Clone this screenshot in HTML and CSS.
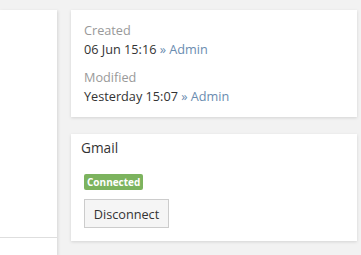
FILE: index.html
```html
<!DOCTYPE html>
<html>
<head>
<meta charset="utf-8">
<link rel="stylesheet" href="styles.css">
</head>
<body>
<div class="layout">
  <div class="left-panel">
    <div class="left-row"></div>
  </div>
  <div class="side">
    <div class="card info">
      <div class="field">
        <div class="label">Created</div>
        <div class="value">06 Jun 15:16 <span class="link">» Admin</span></div>
      </div>
      <div class="field">
        <div class="label">Modified</div>
        <div class="value">Yesterday 15:07 <span class="link">» Admin</span></div>
      </div>
    </div>
    <div class="card gmail">
      <div class="title">Gmail</div>
      <div class="body">
        <span class="badge">Connected</span>
        <button class="btn">Disconnect</button>
      </div>
    </div>
  </div>
</div>
</body>
</html>
```

FILE: styles.css
```css
html, body {
  margin: 0;
  padding: 0;
  background: #f2f2f2;
  font-family: "Open Sans", "Liberation Sans", sans-serif;
  font-size: 12.7px;
  color: #333;
  height: 255px;
  overflow: hidden;
}
.layout {
  display: grid;
  grid-template-columns: 57px 286px;
  column-gap: 14px;
  padding-top: 10px;
  height: 245px;
}
.left-panel {
  background: #fff;
  box-shadow: 1px 1px 3px rgba(0,0,0,0.12);
}
.left-row {
  height: 227px;
  border-bottom: 1px solid #dedede;
}
.side {
  display: flex;
  flex-direction: column;
  gap: 17px;
}
.card {
  background: #fff;
  box-shadow: 0 1px 3px rgba(0,0,0,0.13);
}
.info {
  padding: 11px 13px 10px;
  height: 86px;
}
.field + .field {
  margin-top: 9px;
}
.label {
  color: #999;
  line-height: 19px;
}
.value {
  line-height: 19px;
}
.link {
  color: #6a8cb0;
}
.gmail {
  height: 107px;
  padding: 0 10px;
  box-sizing: border-box;
}
.title {
  font-size: 13.7px;
  line-height: 20px;
  padding-top: 4px;
  color: #333;
}
.body {
  padding: 16px 3px 0;
  display: flex;
  flex-direction: column;
  align-items: flex-start;
}
.badge {
  background: #7cb35e;
  color: #fff;
  font-weight: bold;
  font-size: 10px;
  line-height: 16px;
  height: 16px;
  padding: 0 3px;
  border-radius: 2px;
}
.btn {
  margin-top: 9px;
  font-family: inherit;
  font-size: 12.7px;
  color: #333;
  background: #f5f5f5;
  border: 1px solid #ccc;
  height: 29px;
  width: 85px;
  padding: 0;
  border-radius: 0;
}
```
